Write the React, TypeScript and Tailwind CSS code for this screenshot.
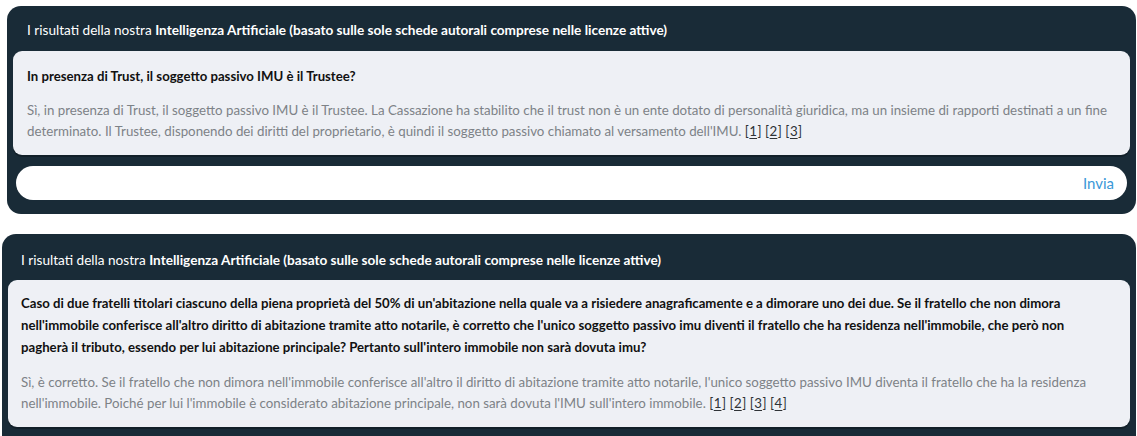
import React from 'react';

const Cite: React.FC<{ n: number }> = ({ n }) => (
  <span className="text-[#2f3337]">
    [<span className="inline-block mx-[0.5px] underline underline-offset-2">{n}</span>]
  </span>
);

const Header: React.FC<{ className?: string }> = ({ className }) => (
  <p className={`text-white text-[13.6px] leading-5 ${className ?? ''}`}>
    I risultati della nostra <b className="font-bold">Intelligenza Artificiale (basato sulle sole schede autorali comprese nelle licenze attive)</b>
  </p>
);

export default function App() {
  return (
    <div className="bg-white min-h-screen pt-[6px] font-['Lato',sans-serif]">
      {/* First result with input */}
      <section className="ml-[7px] mr-px bg-[#192b37] rounded-[14px] pb-[14px]">
        <Header className="pt-[14px] pl-[20px] pb-[11px]" />
        <div className="ml-[6px] mr-[6px] bg-[#eef0f5] rounded-[9px] shadow-[0_2px_0_rgba(0,0,0,0.25)] pl-[14px] pr-4 pt-[15px] pb-[13px]">
          <p className="text-[13.2px] leading-5 font-bold text-[#111]">In presenza di Trust, il soggetto passivo IMU è il Trustee?</p>
          <p className="mt-[14px] text-[13.3px] leading-[21px] text-[#7d8287]">
            Sì, in presenza di Trust, il soggetto passivo IMU è il Trustee. La Cassazione ha stabilito che il trust non è un ente dotato di personalità giuridica, ma un insieme di rapporti destinati a un fine determinato. Il Trustee, disponendo dei diritti del proprietario, è quindi il soggetto passivo chiamato al versamento dell'IMU. <Cite n={1} /> <Cite n={2} /> <Cite n={3} />
          </p>
        </div>
        <div className="mt-[11px] ml-[9px] mr-[9px] h-[34px] bg-white rounded-full flex items-center justify-end pr-[13px]">
          <span className="text-[#3a98d8] text-[15px]">Invia</span>
        </div>
      </section>

      {/* Second result */}
      <section className="mt-[20px] ml-[2px] mr-px bg-[#192b37] rounded-t-[14px] pb-[12px]">
        <Header className="pt-[16px] pl-[19px] pb-[10px]" />
        <div className="ml-[6px] mr-[6px] bg-[#eef0f5] rounded-[9px] shadow-[0_2px_0_rgba(0,0,0,0.25)] pl-[13px] pr-4 pt-[12px] pb-[13px]">
          <p className="text-[13.2px] leading-[22px] font-bold text-[#111]">
            Caso di due fratelli titolari ciascuno della piena proprietà del 50% di un'abitazione nella quale va a risiedere anagraficamente e a dimorare uno dei due. Se il fratello che non dimora nell'immobile conferisce all'altro diritto di abitazione tramite atto notarile, è corretto che l'unico soggetto passivo imu diventi il fratello che ha residenza nell'immobile, che però non pagherà il tributo, essendo per lui abitazione principale? Pertanto sull'intero immobile non sarà dovuta imu?
          </p>
          <p className="mt-[14px] text-[13.3px] leading-[21px] text-[#7d8287]">
            Sì, è corretto. Se il fratello che non dimora nell'immobile conferisce all'altro il diritto di abitazione tramite atto notarile, l'unico soggetto passivo IMU diventa il fratello che ha la residenza nell'immobile. Poiché per lui l'immobile è considerato abitazione principale, non sarà dovuta l'IMU sull'intero immobile. <Cite n={1} /> <Cite n={2} /> <Cite n={3} /> <Cite n={4} />
          </p>
        </div>
      </section>
    </div>
  );
}
